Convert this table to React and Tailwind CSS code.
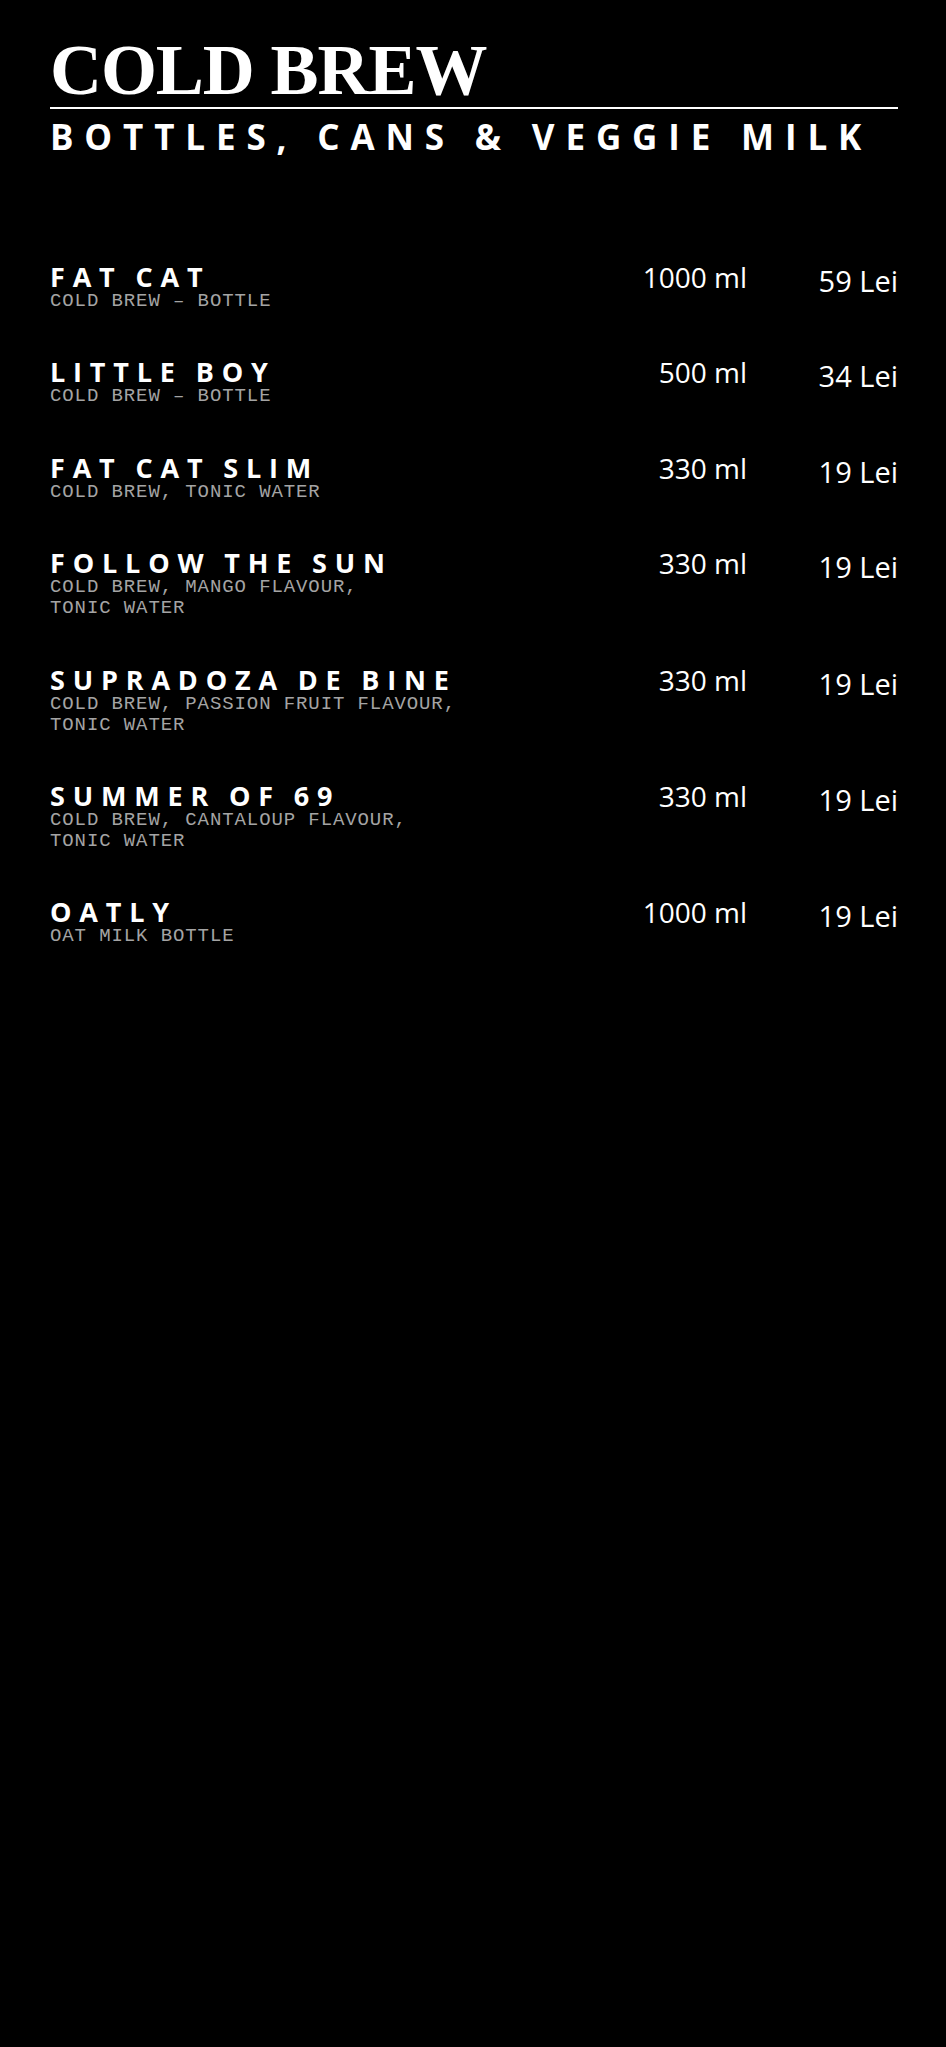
const items = [
  { name: "FAT CAT", sub: ["COLD BREW – BOTTLE"], size: "1000 ml", price: "59 Lei" },
  { name: "LITTLE BOY", sub: ["COLD BREW – BOTTLE"], size: "500 ml", price: "34 Lei" },
  { name: "FAT CAT SLIM", sub: ["COLD BREW, TONIC WATER"], size: "330 ml", price: "19 Lei" },
  {
    name: "FOLLOW THE SUN",
    sub: ["COLD BREW, MANGO FLAVOUR,", "TONIC WATER"],
    size: "330 ml",
    price: "19 Lei",
  },
  {
    name: "SUPRADOZA DE BINE",
    sub: ["COLD BREW, PASSION FRUIT FLAVOUR,", "TONIC WATER"],
    size: "330 ml",
    price: "19 Lei",
  },
  {
    name: "SUMMER OF 69",
    sub: ["COLD BREW, CANTALOUP FLAVOUR,", "TONIC WATER"],
    size: "330 ml",
    price: "19 Lei",
  },
  { name: "OATLY", sub: ["OAT MILK BOTTLE"], size: "1000 ml", price: "19 Lei" },
];

const MenuRow = ({ item }) => (
  <div className="flex items-start">
    <div className="flex-1">
      <p className="font-['Open_Sans',sans-serif] font-bold text-[27px] leading-[28px] tracking-[0.29em] [word-spacing:-2px] text-white">
        {item.name}
      </p>
      {item.sub.map((line) => (
        <p
          key={line}
          className="font-['Liberation_Mono',monospace] text-[19px] leading-[21px] tracking-[0.9px] text-[#a4a4a4]"
        >
          {line}
        </p>
      ))}
    </div>
    <p className="font-['Open_Sans',sans-serif] text-[28px] leading-[28px] text-white text-right">
      {item.size}
    </p>
    <p className="w-[151px] mt-[4px] font-['Open_Sans',sans-serif] text-[29px] leading-[28px] text-white text-right">
      {item.price}
    </p>
  </div>
);

export default function App() {
  return (
    <main className="min-h-screen bg-black pl-[50px] pr-[48px] pt-[34px]">
      <h1 className="font-['Liberation_Serif',serif] font-bold text-[72px] leading-[72px] tracking-[-0.015em] text-white">
        COLD BREW
      </h1>
      <div className="mt-[1px] h-[2px] bg-white" />
      <h2 className="mt-[10px] font-['Open_Sans',sans-serif] font-bold text-[35px] leading-[35px] tracking-[0.31em] text-white whitespace-nowrap">
        BOTTLES, CANS &amp; VEGGIE MILK
      </h2>
      <div className="mt-[109px] flex flex-col gap-[46.4px]">
        {items.map((item) => (
          <MenuRow key={item.name} item={item} />
        ))}
      </div>
    </main>
  );
}
